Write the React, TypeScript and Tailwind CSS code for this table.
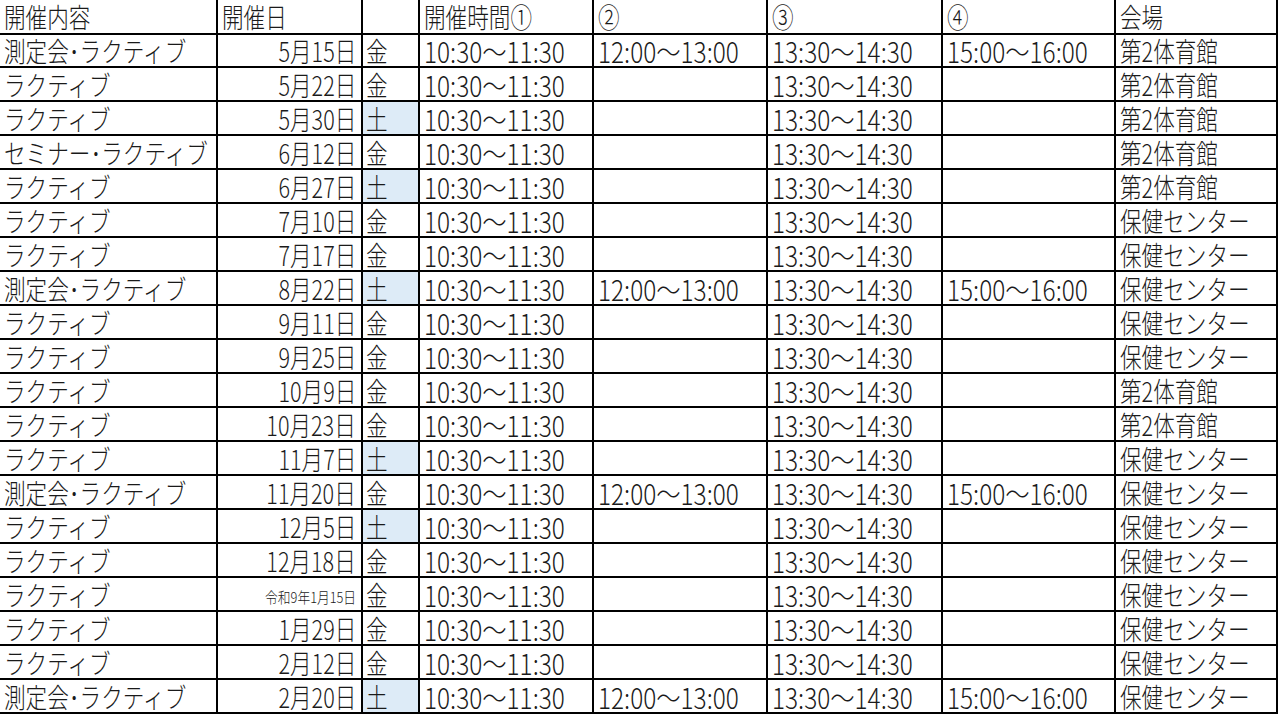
import React from "react";

type Row = {
  name: string;
  date: string;
  day: "金" | "土";
  t2?: boolean;
  hall: string;
  small?: boolean;
};

const rows: Row[] = [
  { name: "測定会･ラクティブ", date: "5月15日", day: "金", t2: true, hall: "第2体育館" },
  { name: "ラクティブ", date: "5月22日", day: "金", hall: "第2体育館" },
  { name: "ラクティブ", date: "5月30日", day: "土", hall: "第2体育館" },
  { name: "セミナー･ラクティブ", date: "6月12日", day: "金", hall: "第2体育館" },
  { name: "ラクティブ", date: "6月27日", day: "土", hall: "第2体育館" },
  { name: "ラクティブ", date: "7月10日", day: "金", hall: "保健センター" },
  { name: "ラクティブ", date: "7月17日", day: "金", hall: "保健センター" },
  { name: "測定会･ラクティブ", date: "8月22日", day: "土", t2: true, hall: "保健センター" },
  { name: "ラクティブ", date: "9月11日", day: "金", hall: "保健センター" },
  { name: "ラクティブ", date: "9月25日", day: "金", hall: "保健センター" },
  { name: "ラクティブ", date: "10月9日", day: "金", hall: "第2体育館" },
  { name: "ラクティブ", date: "10月23日", day: "金", hall: "第2体育館" },
  { name: "ラクティブ", date: "11月7日", day: "土", hall: "保健センター" },
  { name: "測定会･ラクティブ", date: "11月20日", day: "金", t2: true, hall: "保健センター" },
  { name: "ラクティブ", date: "12月5日", day: "土", hall: "保健センター" },
  { name: "ラクティブ", date: "12月18日", day: "金", hall: "保健センター" },
  { name: "ラクティブ", date: "令和9年1月15日", day: "金", hall: "保健センター", small: true },
  { name: "ラクティブ", date: "1月29日", day: "金", hall: "保健センター" },
  { name: "ラクティブ", date: "2月12日", day: "金", hall: "保健センター" },
  { name: "測定会･ラクティブ", date: "2月20日", day: "土", t2: true, hall: "保健センター" },
];

const cell = "border-r-2 border-b-2 border-black flex items-start pt-[2px]";

// narrow spreadsheet font look
const Txt = ({ children, right }: { children?: React.ReactNode; right?: boolean }) => (
  <span
    className={`inline-block whitespace-nowrap text-[27px] leading-[30px] scale-x-[0.8] ${
      right ? "origin-right" : "origin-left"
    }`}
  >
    {children}
  </span>
);

// time ranges: digits are taller in the sheet
const Time = ({ children }: { children?: React.ReactNode }) => (
  <span className="inline-block whitespace-nowrap text-[28px] leading-[30px] scale-x-[0.87] origin-left">
    {children}
  </span>
);

export default function App() {
  return (
    <div
      className="w-[1280px] h-[720px] bg-white text-[#1a1a1a] font-light overflow-hidden"
      style={{ fontFamily: '"Noto Sans CJK JP", sans-serif' }}
    >
      <div className="grid grid-cols-[218px_145px_57px_174px_174px_175px_173px_162px] auto-rows-[34px] [&>div:nth-child(-n+8)]:h-[35px]">
        <div className={`${cell} pl-[4px]`}><Txt>開催内容</Txt></div>
        <div className={`${cell} pl-[4px]`}><Txt>開催日</Txt></div>
        <div className={cell}></div>
        <div className={`${cell} pl-[4px]`}><Txt>開催時間①</Txt></div>
        <div className={`${cell} pl-[4px]`}><Txt>②</Txt></div>
        <div className={`${cell} pl-[4px]`}><Txt>③</Txt></div>
        <div className={`${cell} pl-[4px]`}><Txt>④</Txt></div>
        <div className={`${cell} pl-[4px]`}><Txt>会場</Txt></div>

        {rows.map((r, i) => (
          <React.Fragment key={i}>
            <div className={`${cell} pl-[4px]`}><Txt>{r.name}</Txt></div>
            <div className={`${cell} justify-end pr-[5px]`}>
              {r.small ? (
                <span className="inline-block whitespace-nowrap text-[15px] leading-[20px] scale-x-[0.85] origin-right mt-[7px]">
                  {r.date}
                </span>
              ) : (
                <Txt right>{r.date}</Txt>
              )}
            </div>
            <div className={`${cell} pl-[3px] ${r.day === "土" ? "bg-[#ddebf7]" : ""}`}>
              <Txt>{r.day}</Txt>
            </div>
            <div className={`${cell} pl-[4px]`}><Time>10:30～11:30</Time></div>
            <div className={`${cell} pl-[4px]`}>{r.t2 && <Time>12:00～13:00</Time>}</div>
            <div className={`${cell} pl-[4px]`}><Time>13:30～14:30</Time></div>
            <div className={`${cell} pl-[4px]`}>{r.t2 && <Time>15:00～16:00</Time>}</div>
            <div className={`${cell} pl-[4px]`}><Txt>{r.hall}</Txt></div>
          </React.Fragment>
        ))}
      </div>
    </div>
  );
}
